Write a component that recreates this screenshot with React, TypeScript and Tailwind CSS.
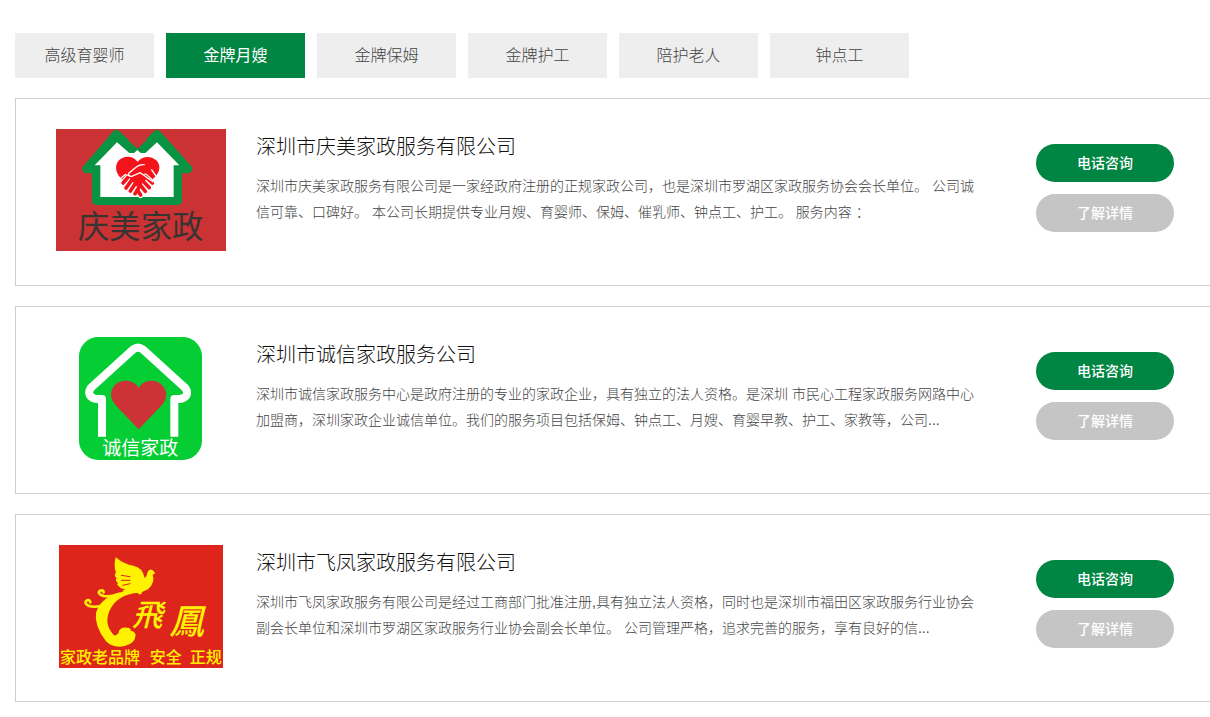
import React from "react";

const tabs = ["高级育婴师", "金牌月嫂", "金牌保姆", "金牌护工", "陪护老人", "钟点工"];

const logoFont = '"Noto Sans CJK SC", sans-serif';

const leftFingers = "M234 172 L219 189 M244 182 L228 204 M255 192 L241 213 M266 204 L255 221";
const rightFingers = "M286 170 L307 189 M276 180 L298 203 M268 192 L286 214 M262 210 L272 225";

function QingmeiLogo() {
  return (
    <svg viewBox="18 27 510 366" className="block h-[122px] w-[170px]" role="img" aria-label="庆美家政">
      <rect x="18" y="27" width="510" height="366" fill="#cb3234" />
      <path d="M110 147 L199 43 L246 86 H278 L321 43 L414 147 H383 V242 H139 V147 Z" fill="#079342" stroke="#079342" strokeWidth="26" strokeLinejoin="round" />
      <path d="M234 60 L262 86 L290 60 V40 H234 Z" fill="#cb3234" />
      <path d="M134 136 L201 67 L238 99 H252 L262 90 L272 99 H286 L321 67 L388 136 H371 V231 H151 V136 Z" fill="#fff" />
      <path d="M263 126 C250 106 222 106 207 121 C192 137 198 158 210 172 L224 186 L262 216 L300 186 L314 172 C332 154 332 134 319 121 C302 106 276 107 263 126 Z" fill="#f5131b" />
      <path d={leftFingers} stroke="#fff" strokeWidth="18" strokeLinecap="round" />
      <path d={rightFingers} stroke="#fff" strokeWidth="18" strokeLinecap="round" />
      <path d={leftFingers} stroke="#f5131b" strokeWidth="11" strokeLinecap="round" />
      <path d={rightFingers} stroke="#f5131b" strokeWidth="11" strokeLinecap="round" />
      <path d="M236 170 L256 150 L278 160 L294 172 L264 204 Z" fill="#f5131b" />
      <path d="M284 134 Q268 132 258 142 L236 160 Q233 170 245 169 L271 158 L290 172 L310 186" fill="none" stroke="#fff" strokeWidth="4" strokeLinejoin="round" />
      <path d="M228 162 L206 180 M304 148 L318 168" fill="none" stroke="#fff" strokeWidth="4" />
      <text x="84" y="354" fontSize="94" fontFamily={logoFont} fill="#383431">庆美家政</text>
    </svg>
  );
}

function ChengxinLogo() {
  return (
    <svg viewBox="27 21 372 369" className="block h-[123px] w-[124px]" role="img" aria-label="诚信家政">
      <rect x="27" y="21" width="369" height="369" rx="58" fill="#05ce35" />
      <path d="M96 320 V207 H78 Q48 199 62 174 L190 58 Q204 48 218 58 L346 174 Q362 199 330 207 H313 V320" fill="none" stroke="#fff" strokeWidth="24" strokeLinejoin="round" />
      <path d="M206 174 C190 145 146 146 130 171 C117 192 124 211 139 228 L206 298 L273 228 C290 211 294 190 281 171 C262 145 222 147 206 174 Z" fill="#cd3336" />
      <text x="97" y="375" fontSize="57" fontFamily={logoFont} fill="#fff">诚信家政</text>
    </svg>
  );
}

function FeifengLogo() {
  return (
    <svg viewBox="27 21 492 369" className="block h-[123px] w-[164px]" role="img" aria-label="飞凤 家政老品牌 安全 正规">
      <rect x="27" y="21" width="492" height="369" fill="#de251c" />
      <g fill="#fff200">
        <path d="M197 58 Q224 80 250 83 Q278 88 284 120 Q291 116 292 104 Q298 90 308 97 L316 106 L308 110 Q316 134 294 154 L276 162 Q274 176 262 164 Q240 166 216 160 L226 153 Q212 154 206 144 Q199 140 204 134 Q194 130 200 120 Q190 112 198 104 Q190 84 197 58 Z" />
        <path d="M258 148 L262 164 Q206 170 184 208 Q160 250 184 282 Q194 300 205 286 Q208 266 232 269 Q244 270 242 278 Q252 278 257 290 Q256 316 224 324 Q190 332 168 310 Q132 262 138 224 Q150 184 200 166 Q228 162 258 148 Z" />
      </g>
      <path d="M214 112 L240 116 M214 127 L240 127 M218 142 L240 137" stroke="#de251c" strokeWidth="3" strokeLinecap="round" />
      <g fill="none" stroke="#fff200" strokeLinecap="round" strokeLinejoin="round">
        <path d="M206 168 Q182 178 160 174 Q140 166 150 158 Q160 154 161 163" strokeWidth="8" />
        <path d="M170 196 Q140 212 115 203 Q100 194 111 187 Q120 184 121 193" strokeWidth="8" />
      </g>
      <g fill="#fff200" fontFamily={logoFont}>
        <text x="246" y="264" fontSize="92" fontStyle="italic" fontWeight="500">飛</text>
        <text x="358" y="288" fontSize="104" fontStyle="italic" fontWeight="500">鳳</text>
        <text x="30" y="374" fontSize="48" fontWeight="500">家政老品牌</text>
        <text x="299" y="374" fontSize="48" fontWeight="500">安全</text>
        <text x="419" y="374" fontSize="48" fontWeight="500">正规</text>
      </g>
    </svg>
  );
}

const companies = [
  {
    name: "深圳市庆美家政服务有限公司",
    text: "深圳市庆美家政服务有限公司是一家经政府注册的正规家政公司，也是深圳市罗湖区家政服务协会会长单位。 公司诚信可靠、口碑好。 本公司长期提供专业月嫂、育婴师、保姆、催乳师、钟点工、护工。 服务内容 ：",
    Logo: QingmeiLogo,
  },
  {
    name: "深圳市诚信家政服务公司",
    text: "深圳市诚信家政服务中心是政府注册的专业的家政企业，具有独立的法人资格。是深圳 市民心工程家政服务网路中心加盟商，深圳家政企业诚信单位。我们的服务项目包括保姆、钟点工、月嫂、育婴早教、护工、家教等，公司...",
    Logo: ChengxinLogo,
  },
  {
    name: "深圳市飞凤家政服务有限公司",
    text: "深圳市飞凤家政服务有限公司是经过工商部门批准注册,具有独立法人资格，同时也是深圳市福田区家政服务行业协会副会长单位和深圳市罗湖区家政服务行业协会副会长单位。 公司管理严格，追求完善的服务，享有良好的信...",
    Logo: FeifengLogo,
  },
];

export default function App() {
  return (
    <main className="bg-white pt-[33px] pb-4 pl-[15px] font-['Liberation_Sans','Noto_Sans_CJK_SC',sans-serif] text-[#666]">
      <nav className="mb-5 flex gap-3">
        {tabs.map((tab, i) => (
          <button
            key={tab}
            type="button"
            className={i === 1 ? "h-[45px] w-[139px] bg-[#008542] text-base text-white" : "h-[45px] w-[139px] bg-[#eeeeee] text-base font-light text-[#444]"}
          >
            {tab}
          </button>
        ))}
      </nav>
      <div className="flex flex-col gap-5">
        {companies.map(({ name, text, Logo }) => (
          <article key={name} className="flex min-h-[188px] items-start border border-r-0 border-[#cfcfcf] pt-[30px] pr-9 pl-10">
            <div className="flex w-[170px] shrink-0 justify-center">
              <Logo />
            </div>
            <div className="ml-[30px] min-w-0 flex-1">
              <h2 className="text-xl leading-9 font-light text-[#111]">{name}</h2>
              <p className="mt-2 text-sm leading-[26px] font-light text-[#444]">{text}</p>
            </div>
            <div className="mt-[15px] ml-[57px] flex w-[138px] shrink-0 flex-col gap-3">
              <button type="button" className="h-[38px] rounded-full bg-[#008542] text-sm font-medium text-white">电话咨询</button>
              <button type="button" className="h-[38px] rounded-full bg-[#c5c5c5] text-sm font-medium text-white">了解详情</button>
            </div>
          </article>
        ))}
      </div>
    </main>
  );
}
